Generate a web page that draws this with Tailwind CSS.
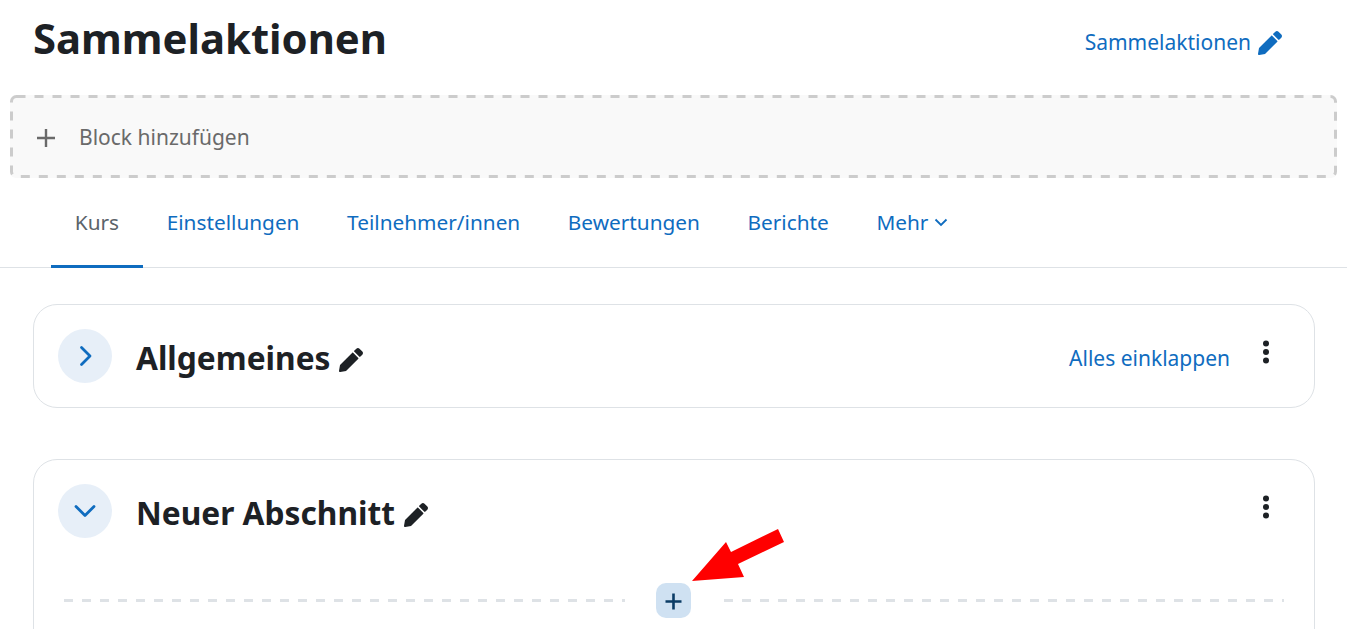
<!DOCTYPE html>
<html lang="de">
<head>
  <meta charset="UTF-8" />
  <title>Sammelaktionen</title>
  <script src="https://cdn.jsdelivr.net/npm/@tailwindcss/browser@4"></script>
</head>
<body class="bg-white h-[629px] overflow-hidden relative font-['Noto_Sans','Open_Sans',sans-serif] text-[#1d2125]">

  <!-- header -->
  <div class="h-[95px] flex justify-between pl-[33px] pr-[65px]">
    <h1 class="text-[41.8px] font-bold leading-[76px]">Sammelaktionen</h1>
    <a class="flex items-center gap-[7px] h-[84px] pt-[2px] text-[#0f6cbf] text-[21px]">
      Sammelaktionen
      <svg class="w-[24px] h-[24px] fill-current" viewBox="0 0 512 512"><path d="M497.9 142.1l-46.1 46.1c-4.7 4.7-12.3 4.7-17 0l-111-111c-4.7-4.7-4.7-12.3 0-17l46.1-46.1c18.7-18.7 49.1-18.7 67.9 0l60.1 60.1c18.8 18.7 18.8 49.1 0 67.9zM284.2 99.8L21.6 362.4.4 483.9c-2.9 16.4 11.4 30.6 27.8 27.8l121.5-21.3 262.6-262.6c4.7-4.7 4.7-12.3 0-17l-111-111c-4.8-4.7-12.4-4.7-17.1 0z"/></svg>
    </a>
  </div>

  <!-- add block -->
  <div class="relative mx-[10px] h-[83px] flex items-center gap-[23px] pl-[26px] pt-[2px] bg-[#f9f9f9] rounded-md text-[#6a6a6a] text-[21px]">
    <svg class="absolute left-0 top-0" width="1327" height="83" fill="none"><rect x="1.5" y="1.5" width="1324" height="80" rx="5" stroke="#cccccc" stroke-width="3" stroke-dasharray="9 9"/></svg>
    <svg class="w-[20px] h-[20px]" viewBox="0 0 20 20"><path d="M10 1v18M1 10h18" stroke="currentColor" stroke-width="2.4"/></svg>
    Block hinzufügen
  </div>

  <!-- tabs -->
  <nav class="mt-[9px] mb-[36px] h-[81px] flex pl-[51px] border-b border-[#dee2e6] text-[20.8px] text-[#0f6cbf]">
    <a class="h-[81px] px-[23.8px] pt-[20px] border-b-[3px] border-[#0f6cbf] text-[#5b636a]">Kurs</a>
    <a class="px-[23.8px] pt-[20px]">Einstellungen</a>
    <a class="px-[23.8px] pt-[20px]">Teilnehmer/innen</a>
    <a class="px-[23.8px] pt-[20px]">Bewertungen</a>
    <a class="px-[23.8px] pt-[20px]">Berichte</a>
    <a class="px-[23.8px] pt-[20px] flex items-start gap-[5.5px]">
      Mehr
      <svg class="w-[14px] h-[9px] mt-[11px]" viewBox="0 0 14 9" fill="none"><path d="M1.5 1.5l5.5 5.5 5.5-5.5" stroke="currentColor" stroke-width="1.8"/></svg>
    </a>
  </nav>

  <!-- collapsed section -->
  <section class="ml-[33px] mr-[32px] h-[104px] border border-[#dee2e6] rounded-[24px] flex items-center pl-[24px] pr-[44px]">
    <div class="w-[54px] h-[54px] rounded-full bg-[#e7eff8] flex items-center justify-center text-[#0f6cbf]">
      <svg class="w-[16px] h-[24px]" viewBox="0 0 16 24" fill="none"><path d="M4.5 3.5l8.5 8.5-8.5 8.5" stroke="currentColor" stroke-width="2.8" stroke-linecap="round" stroke-linejoin="round"/></svg>
    </div>
    <h3 class="ml-[24px] text-[31.7px] font-bold pt-[4px]">Allgemeines</h3>
    <svg class="ml-[9px] mt-[7px] w-[24px] h-[24px] fill-current" viewBox="0 0 512 512"><path d="M497.9 142.1l-46.1 46.1c-4.7 4.7-12.3 4.7-17 0l-111-111c-4.7-4.7-4.7-12.3 0-17l46.1-46.1c18.7-18.7 49.1-18.7 67.9 0l60.1 60.1c18.8 18.7 18.8 49.1 0 67.9zM284.2 99.8L21.6 362.4.4 483.9c-2.9 16.4 11.4 30.6 27.8 27.8l121.5-21.3 262.6-262.6c4.7-4.7 4.7-12.3 0-17l-111-111c-4.8-4.7-12.4-4.7-17.1 0z"/></svg>
    <a class="ml-auto text-[#0f6cbf] text-[21px] pt-[6px]">Alles einklappen</a>
    <svg class="ml-[32px] mb-[9px] w-[8px] h-[24px] fill-current" viewBox="0 0 8 24"><circle cx="4" cy="3.5" r="3"/><circle cx="4" cy="12" r="3"/><circle cx="4" cy="20.5" r="3"/></svg>
  </section>

  <!-- open section -->
  <section class="mt-[51px] ml-[33px] mr-[32px] h-[240px] border border-[#dee2e6] rounded-[24px] pl-[24px] pr-[44px] pt-[24px]">
    <div class="flex items-center">
      <div class="w-[54px] h-[54px] rounded-full bg-[#e7eff8] flex items-center justify-center text-[#0f6cbf]">
        <svg class="w-[24px] h-[16px]" viewBox="0 0 24 16" fill="none"><path d="M3 3.5l9 9 9-9" stroke="currentColor" stroke-width="2.8" stroke-linecap="round" stroke-linejoin="round"/></svg>
      </div>
      <h3 class="ml-[24px] text-[31.7px] font-bold pt-[4px]">Neuer Abschnitt</h3>
      <svg class="ml-[9px] mt-[7px] w-[24px] h-[24px] fill-current" viewBox="0 0 512 512"><path d="M497.9 142.1l-46.1 46.1c-4.7 4.7-12.3 4.7-17 0l-111-111c-4.7-4.7-4.7-12.3 0-17l46.1-46.1c18.7-18.7 49.1-18.7 67.9 0l60.1 60.1c18.8 18.7 18.8 49.1 0 67.9zM284.2 99.8L21.6 362.4.4 483.9c-2.9 16.4 11.4 30.6 27.8 27.8l121.5-21.3 262.6-262.6c4.7-4.7 4.7-12.3 0-17l-111-111c-4.8-4.7-12.4-4.7-17.1 0z"/></svg>
      <svg class="ml-auto mb-[8px] w-[8px] h-[24px] fill-current" viewBox="0 0 8 24"><circle cx="4" cy="3.5" r="3"/><circle cx="4" cy="12" r="3"/><circle cx="4" cy="20.5" r="3"/></svg>
    </div>
    <div class="mt-[45px] -mr-[14px] ml-[6px] flex items-center">
      <div class="flex-1 h-[3px] bg-[repeating-linear-gradient(90deg,#dee2e6_0_9px,transparent_9px_18px)]"></div>
      <div class="ml-[31px] mr-[33px] w-[35px] h-[35px] rounded-[10px] bg-[#cfe1f2] flex items-center justify-center text-[#0b3c66]">
        <svg class="w-[18px] h-[18px]" viewBox="0 0 18 18"><path d="M9.5 1.5v16M1.5 9.5h16" stroke="currentColor" stroke-width="2.6"/></svg>
      </div>
      <div class="flex-1 h-[3px] bg-[repeating-linear-gradient(90deg,#dee2e6_0_9px,transparent_9px_18px)]"></div>
    </div>
  </section>

  <!-- red arrow annotation -->
  <svg class="absolute left-0 top-0 pointer-events-none" width="1347" height="629"><polygon points="692,581 726,542 731,552 778,529 784,542 738,564 744,577" fill="#ff0000"/></svg>

</body>
</html>
